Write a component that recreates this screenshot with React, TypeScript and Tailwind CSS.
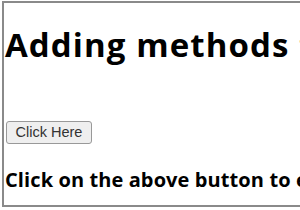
export default function App() {
  return (
    <div className="w-[300px] h-[210px] overflow-hidden bg-white">
      <div className="ml-[2px] mt-[1px] w-[400px] h-[206px] border-l-2 border-t-2 border-b-2 border-[#8a8a8a] pl-[1px] bg-white" style={{ fontFamily: '"Open Sans", "Noto Sans", sans-serif' }}>
        <h1 className="mt-[22px] text-[33px] tracking-[1.1px] font-bold leading-[40px] text-black whitespace-nowrap">Adding methods to objects</h1>
        <button className="mt-[56px] ml-[1px] h-[23px] w-[86px] text-[14.5px] leading-[21px] text-[#333] bg-[#efefef] border border-[#999] rounded-[3px]" style={{ fontFamily: '"Liberation Sans", Arial, sans-serif' }}>Click Here</button>
        <p className="mt-[24px] text-[20px] tracking-[0.1px] font-bold text-black whitespace-nowrap leading-[24px]">Click on the above button to execute</p>
      </div>
    </div>
  );
}
